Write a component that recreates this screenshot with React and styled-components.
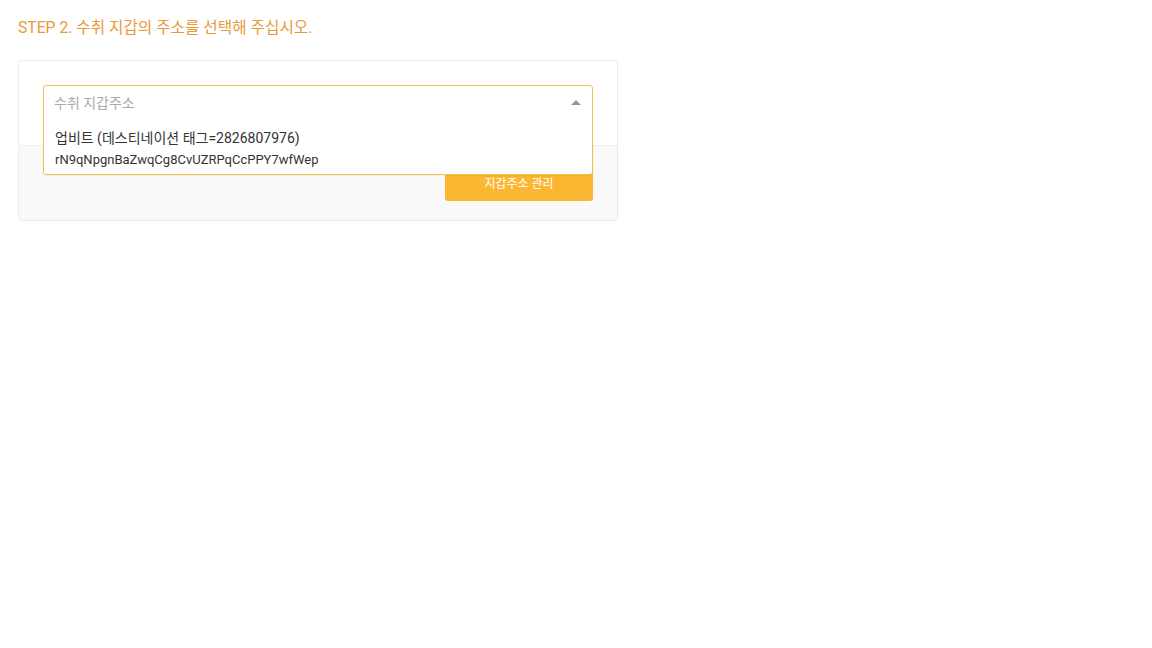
import styled, { createGlobalStyle } from 'styled-components'

const GlobalStyle = createGlobalStyle`
  body {
    margin: 0;
    background: #fff;
    font-family: Roboto, "Noto Sans CJK KR", sans-serif;
  }
`

const Page = styled.div`
  padding: 17px 18px;
  width: 600px;
`

const StepTitle = styled.h3`
  margin: 0 0 21px;
  font-size: 15.7px;
  font-weight: 400;
  line-height: 22px;
  color: #e8993a;
`

const Card = styled.div`
  border: 1px solid #ececec;
  border-radius: 3px;
  background: #fff;
`

const CardBody = styled.div`
  padding: 24px 24px 26px;
`

const CardFooter = styled.div`
  display: flex;
  justify-content: flex-end;
  padding: 21px 24px 19px;
  background: #f9f9f9;
  border-top: 1px solid #f1f1f1;
`

const SelectWrap = styled.div`
  position: relative;
  height: 34px;
  z-index: 2;
`

const SelectBox = styled.div`
  position: absolute;
  top: 0;
  left: 0;
  right: 0;
  border: 1px solid #f3c14a;
  border-radius: 3px;
  background: #fff;
  box-shadow: 0 1px 2px rgba(0, 0, 0, 0.05);
`

const Control = styled.div`
  display: flex;
  align-items: center;
  justify-content: space-between;
  height: 32px;
  padding: 0 10px;
`

const Placeholder = styled.span`
  font-size: 14px;
  color: #aaa;
`

const Caret = styled.span`
  width: 0;
  height: 0;
  border-left: 5px solid transparent;
  border-right: 5px solid transparent;
  border-bottom: 5px solid #999;
  margin-right: 1px;
`

const Option = styled.div`
  padding: 10px 11px 2px;
`

const OptionName = styled.div`
  font-size: 14px;
  line-height: 20px;
  color: #333;
`

const OptionAddress = styled.div`
  font-size: 13px;
  line-height: 24px;
  color: #333;
`

const Button = styled.button`
  width: 148px;
  height: 34px;
  border: none;
  border-radius: 3px;
  background: #fbb731;
  color: #fff;
  font-family: inherit;
  font-size: 12px;
  padding: 0 0 3px;
  cursor: pointer;
`

export default function App() {
  return (
    <Page>
      <GlobalStyle />
      <StepTitle>STEP 2. 수취 지갑의 주소를 선택해 주십시오.</StepTitle>
      <Card>
        <CardBody>
          <SelectWrap>
            <SelectBox>
              <Control>
                <Placeholder>수취 지갑주소</Placeholder>
                <Caret />
              </Control>
              <Option>
                <OptionName>업비트 (데스티네이션 태그=2826807976)</OptionName>
                <OptionAddress>rN9qNpgnBaZwqCg8CvUZRPqCcPPY7wfWep</OptionAddress>
              </Option>
            </SelectBox>
          </SelectWrap>
        </CardBody>
        <CardFooter>
          <Button>지갑주소 관리</Button>
        </CardFooter>
      </Card>
    </Page>
  )
}
